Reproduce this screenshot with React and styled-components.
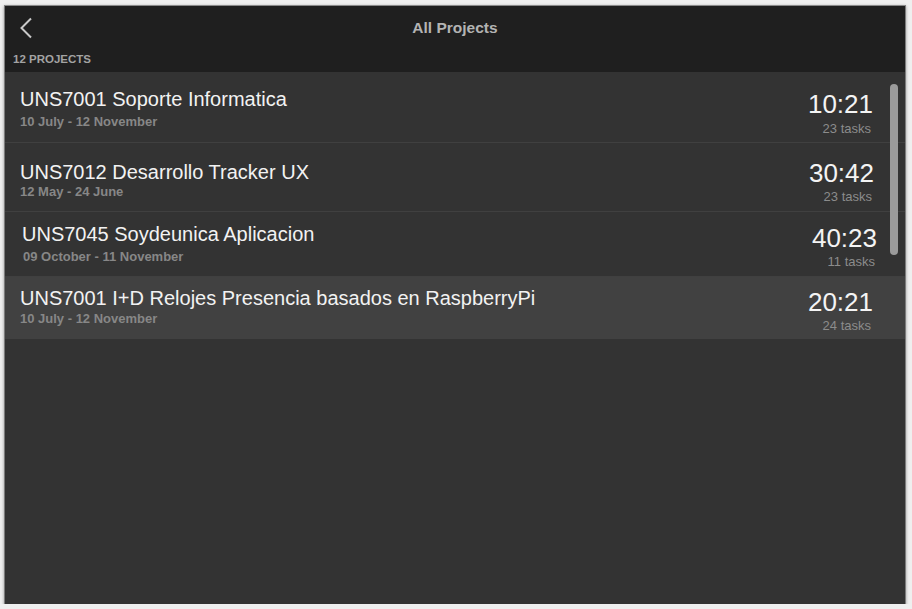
import React from 'react'
import styled, { createGlobalStyle } from 'styled-components'

const Global = createGlobalStyle`
	html, body {
		margin: 0;
		padding: 0;
		background: #efefef;
		font-family: "Liberation Sans", Arial, sans-serif;
	}
`

const projects = [
	{ name: 'UNS7001 Soporte Informatica', dates: '10 July - 12 November', time: '10:21', tasks: 23, h: 71, top: 16, gap: 4, rTop: 17, rGap: 2, indent: 0, shift: 0 },
	{ name: 'UNS7012 Desarrollo Tracker UX', dates: '12 May - 24 June', time: '30:42', tasks: 23, h: 69, top: 18, gap: 1, rTop: 15, rGap: 1, indent: 0, shift: 1 },
	{ name: 'UNS7045 Soydeunica Aplicacion', dates: '09 October - 11 November', time: '40:23', tasks: 11, h: 65, top: 11, gap: 4, rTop: 11, rGap: 1, indent: 2, shift: 4 },
	{ name: 'UNS7001 I+D Relojes Presencia basados en RaspberryPi', dates: '10 July - 12 November', time: '20:21', tasks: 24, h: 62, top: 10, gap: 2, rTop: 10, rGap: 1, indent: 0, shift: 0, active: true },
]

function ProjectRow({ p }) {
	return (
		<Row $h={p.h} $active={p.active}>
			<Info $top={p.top} $indent={p.indent}>
				<Title>{p.name}</Title>
				<Dates $gap={p.gap} $indent={p.indent}>{p.dates}</Dates>
			</Info>
			<Totals $top={p.rTop} $shift={p.shift}>
				<Time>{p.time}</Time>
				<Tasks $gap={p.rGap}>{p.tasks} tasks</Tasks>
			</Totals>
		</Row>
	)
}

export default function App() {
	return (
		<Page>
			<Global />
			<Window>
				<Header>
					<NavBar>
						<Back aria-label="back">
							<svg width="14" height="22" viewBox="0 0 14 22">
								<path d="M12 1.5 L2.5 11 L12 20.5" fill="none" stroke="#c9c9c9" strokeWidth="2" />
							</svg>
						</Back>
						<NavTitle>All Projects</NavTitle>
					</NavBar>
					<Section>12 PROJECTS</Section>
				</Header>
				<List>
					{projects.map((p, i) => (
						<ProjectRow key={i} p={p} />
					))}
					<Scroll />
				</List>
			</Window>
		</Page>
	)
}

const Page = styled.div`
	padding: 5px 0 0 4px;
	height: 604px;
	box-sizing: border-box;
`

const Window = styled.div`
	width: 902px;
	height: 601px;
	box-sizing: border-box;
	border: 1px solid #7c7c7c;
	border-top-color: #8a8a8a;
	background: #333333;
	box-shadow: 0 1px 3px rgba(0, 0, 0, 0.35);
	display: flex;
	flex-direction: column;
`

const Header = styled.div`
	background: #1f1f1f;
	height: 66px;
	display: flex;
	flex-direction: column;
`

const NavBar = styled.div`
	height: 43px;
	display: flex;
	align-items: center;
	justify-content: center;
	position: relative;
`

const Back = styled.div`
	position: absolute;
	left: 14px;
	top: 11px;
	display: flex;
`

const NavTitle = styled.div`
	font-size: 15.5px;
	font-weight: bold;
	color: #b3b3b3;
`

const Section = styled.div`
	font-size: 11.5px;
	font-weight: bold;
	color: #a3a3a3;
	padding: 4px 0 0 8px;
`

const List = styled.div`
	flex: 1;
	position: relative;
	background: #333333;
`

const Row = styled.div`
	height: ${p => p.$h}px;
	box-sizing: border-box;
	display: flex;
	justify-content: space-between;
	align-items: flex-start;
	padding: 0 32px 0 15px;
	background: ${p => (p.$active ? '#414141' : '#333333')};
	border-bottom: ${p => (p.$active ? 'none' : '1px solid #404040')};
`

const Info = styled.div`
	display: flex;
	flex-direction: column;
	padding-top: ${p => p.$top}px;
	padding-left: ${p => p.$indent}px;
`

const Title = styled.div`
	font-size: 20px;
	line-height: 23px;
	color: #f2f2f2;
`

const Dates = styled.div`
	font-size: 13px;
	line-height: 14px;
	font-weight: bold;
	color: #878787;
	margin-top: ${p => p.$gap}px;
	padding-left: ${p => (p.$indent ? 1 : 0)}px;
`

const Totals = styled.div`
	display: flex;
	flex-direction: column;
	align-items: flex-end;
	padding-top: ${p => p.$top}px;
	margin-right: -${p => p.$shift}px;
`

const Time = styled.div`
	font-size: 26px;
	line-height: 30px;
	color: #f4f4f4;
`

const Tasks = styled.div`
	font-size: 13px;
	line-height: 15px;
	color: #8c8c8c;
	margin-top: ${p => p.$gap}px;
	margin-right: 2px;
`

const Scroll = styled.div`
	position: absolute;
	top: 12px;
	right: 7px;
	width: 8px;
	height: 171px;
	border-radius: 4px;
	background: #9b9b9b;
`
